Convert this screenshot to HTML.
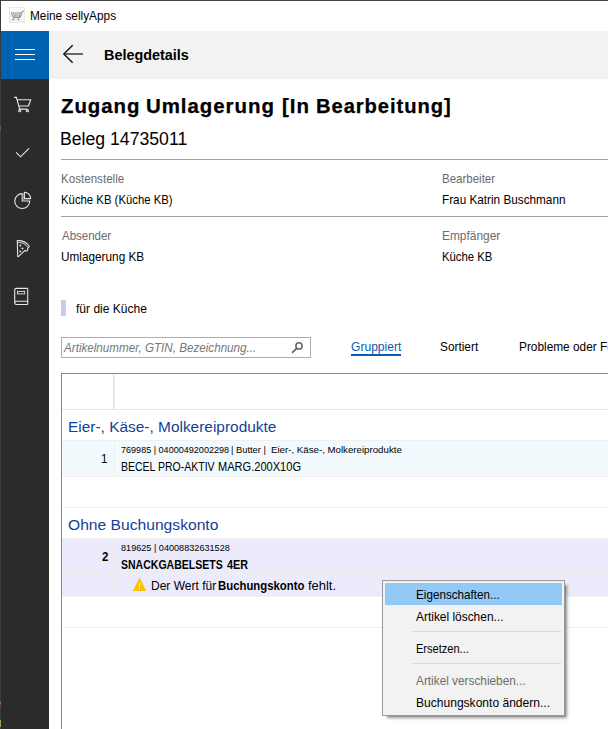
<!DOCTYPE html>
<html lang="de"><head><meta charset="utf-8">
<title>Meine sellyApps</title>
<style>
*{box-sizing:border-box;margin:0;padding:0}
html,body{width:608px;height:729px;overflow:hidden;background:#fff}
body{position:relative;font-family:"Liberation Sans",sans-serif;font-size:12px;color:#000}
.abs{position:absolute}
.t{position:absolute;white-space:nowrap;line-height:1;transform-origin:0 0}
.hr{height:1px;background:#a0a0a0;left:61px;width:547px}
.msep{left:413px;width:148px;height:1px;background:#d7d7d7}
svg{position:absolute;overflow:visible}
</style></head><body>
<div class="abs" style="left:0;top:0;width:608px;height:1px;background:#444"></div>
<div class="abs" style="left:1px;top:31px;width:48px;height:698px;background:#2b2b2b"></div>
<div class="abs" style="left:1px;top:31px;width:48px;height:48px;background:#0063b1"></div>
<div class="abs" style="left:0;top:0;width:1px;height:729px;background:#3a3a3a"></div>
<div class="abs" style="left:0;top:702px;width:1px;height:6px;background:linear-gradient(#8494aa 0,#8494aa 20%,#6c3d28 30%,#6c3d28 100%)"></div>
<div class="abs" style="left:0;top:720px;width:1px;height:7px;background:#9c9b6c"></div>
<div class="abs" style="left:0;top:126px;width:1px;height:5px;background:#4a5a78"></div>
<div class="abs" style="left:49px;top:31px;width:559px;height:48px;background:#f2f2f2"></div>

<!-- app icon -->
<div class="abs" style="left:9px;top:7px;width:16px;height:16px;background:linear-gradient(#fcfcfc,#f1f1f1);border:1px solid #e9e9e9"></div>
<svg style="left:9px;top:7px" width="16" height="16" viewBox="0 0 16 16"><path d="M15 4.3 H13.3 L11.2 10.4 H3.9" fill="none" stroke="#8a8a8a" stroke-width="1"/><path d="M2.2 5.3 L3.9 10 M4.6 5.3 L5.4 9.8 M6.9 5.3 V9.8 M9.2 5.3 L8.6 9.8 M11.3 5.3 L10.4 9.8" stroke="#8c8c8c" stroke-width="1" fill="none"/><path d="M2 5.7 H11.6" stroke="#bdbdbd" stroke-width="1"/><path d="M3.3 12.4 H5.5 M4.4 11.4 V13.3 M8.3 12.4 H10.5 M9.4 11.4 V13.3" stroke="#8f8f8f" stroke-width="0.9"/></svg>

<!-- hamburger -->
<div class="abs" style="left:15px;top:49px;width:20px;height:1px;background:#fff"></div>
<div class="abs" style="left:15px;top:54px;width:20px;height:1px;background:#fff"></div>
<div class="abs" style="left:15px;top:59px;width:20px;height:1px;background:#fff"></div>

<!-- sidebar icons -->
<svg style="left:0;top:0" width="49" height="320" viewBox="0 0 49 320" fill="none" stroke="#e6e6e6" stroke-width="1.1">
 <!-- cart -->
 <path d="M14 97.4 H16.4 L19.7 109.1 H27.4 M17.3 99.7 H30.7 L28.5 106 H19.1"/>
 <circle cx="19.7" cy="110.7" r="1.05"/><circle cx="27.4" cy="110.7" r="1.05"/>
 <!-- check -->
 <path d="M16.1 152.4 L20.5 156.8 L29 148.3"/>
 <!-- pie -->
 <path d="M22.2 193.6 A7.45 7.45 0 1 0 29.65 201.05 H22.2 Z"/>
 <path d="M24.4 192.3 A6.2 6.2 0 0 1 30.6 198.5 H24.4 Z"/>
 <path d="M23.4 193.2 V199.8 H30.2" stroke="#8a8a8a" stroke-width="1"/>
 <!-- pizza -->
 <path d="M17.3 241 Q17.2 240.3 18 240.4 Q25 240.6 29 246 Q29.4 246.7 28.9 247.2 L27.6 248.4 Q28.1 250.9 26.3 251 Q24.9 251 25.3 250.2 L18.4 256.6 Q17.7 256.9 17.7 256 Z"/>
 <path d="M17.6 242.4 Q24.4 242.3 28 247.6" stroke-width="0.9"/>
 <g fill="#e6e6e6" stroke="none"><circle cx="20.3" cy="245.5" r="1"/><circle cx="22.5" cy="248.6" r="1"/><circle cx="20.3" cy="251.5" r="1"/></g>
 <!-- book -->
 <path d="M27.7 288.4 H16.3 Q14.7 288.4 14.7 290 V302.8 Q14.7 304.5 16.3 304.5 H27.7 M27.7 288.4 V304.5 M27.7 301.3 H16.3 Q14.7 301.3 14.7 302.8"/>
 <rect x="17.5" y="291.4" width="7.2" height="2.5" stroke-width="0.9"/>
</svg>

<!-- back arrow -->
<svg style="left:49px;top:31px" width="48" height="48" viewBox="49 31 48 48" fill="none"><path d="M64 54 H83" stroke="#444" stroke-width="1.6"/><path d="M72.7 45.2 L63.8 54 L72.7 62.7" stroke="#111" stroke-width="1.4"/></svg>

<div class="abs hr" style="top:159px"></div>
<div class="abs hr" style="top:216px"></div>

<div class="abs" style="left:61px;top:300px;width:5px;height:16px;background:#c9c9f4"></div>

<div class="abs" style="left:61px;top:337px;width:250px;height:21px;border:1px solid #abadb3;background:#fff"></div>
<svg style="left:290px;top:341px" width="14" height="14" viewBox="0 0 14 14"><circle cx="9" cy="4.9" r="3.1" fill="none" stroke="#666" stroke-width="1.6"/><path d="M6.6 7.4 L2.1 11.9" stroke="#666" stroke-width="1.7" fill="none"/></svg>
<div class="abs" style="left:351px;top:354px;width:50px;height:2px;background:#0a5ab2"></div>

<!-- table -->
<div class="abs" style="left:61px;top:373px;width:560px;height:370px;border:1px solid #828790;background:#fff"></div>
<div class="abs" style="left:62px;top:409px;width:546px;height:1px;background:#e8e8e8"></div>
<div class="abs" style="left:113px;top:374px;width:1px;height:35px;background:#e4e4e4"></div>
<div class="abs" style="left:114px;top:374px;width:1px;height:35px;background:#f0f0f0"></div>
<div class="abs" style="left:62px;top:440px;width:546px;height:37px;background:#f3fafd;border-top:1px solid #efefef;border-bottom:1px solid #efefef"></div>
<div class="abs" style="left:114px;top:441px;width:1px;height:35px;background:#f0f0f0"></div>
<div class="abs" style="left:62px;top:507px;width:546px;height:1px;background:#efefef"></div>
<div class="abs" style="left:62px;top:538px;width:546px;height:59px;background:#ebebfc;border-top:1px solid #efefef;border-bottom:1px solid #efefef"></div>
<div class="abs" style="left:62px;top:574px;width:546px;height:1px;background:#eeeeee"></div>
<div class="abs" style="left:114px;top:539px;width:1px;height:57px;background:#eeeeee"></div>
<div class="abs" style="left:62px;top:627px;width:546px;height:1px;background:#efefef"></div>
<svg style="left:0;top:0" width="160" height="600" viewBox="0 0 160 600"><path d="M139.55 577.6 L146.3 591.1 H132.8 Z" fill="#fdc10c"/><rect x="139" y="583" width="1.1" height="4.1" fill="#ffefb5"/><rect x="139" y="587.9" width="1.1" height="1.3" fill="#ffefb5"/></svg>

<!-- context menu -->
<div class="abs" style="left:388px;top:586px;width:178px;height:131px;background:rgba(0,0,0,.42);box-shadow:0 0 3px 1px rgba(0,0,0,.42)"></div>
<div class="abs" style="left:382px;top:580px;width:183px;height:136px;border:1px solid #999;background:#f2f2f2"></div>
<div class="abs" style="left:385px;top:583px;width:177px;height:22px;background:#91c9f7"></div>
<div class="abs msep" style="top:631px"></div>
<div class="abs msep" style="top:663px"></div>

<div class="t" id="wtitle" style="left:30.20px;top:10px;font-size:12px;transform:scaleX(0.9847);">Meine sellyApps</div>
<div class="t" id="bd" style="left:104.42px;top:47px;font-size:15px;font-weight:bold;transform:scaleX(0.9605);">Belegdetails</div>
<div class="t" id="h1a" style="left:60.97px;top:97px;font-size:19.3px;font-weight:bold;letter-spacing:0.9px;-webkit-text-stroke:0.25px #000;transform:scaleX(1.0575);">Zugang</div>
<div class="t" id="h1b" style="left:146.02px;top:97px;font-size:19.3px;font-weight:bold;letter-spacing:0.9px;-webkit-text-stroke:0.25px #000;transform:scaleX(1.0607);">Umlagerung</div>
<div class="t" id="h1c" style="left:282.32px;top:97px;font-size:19.3px;font-weight:bold;letter-spacing:0.9px;-webkit-text-stroke:0.25px #000;transform:scaleX(1.0602);">[In</div>
<div class="t" id="h1d" style="left:315.60px;top:97px;font-size:19.3px;font-weight:bold;letter-spacing:0.9px;-webkit-text-stroke:0.25px #000;transform:scaleX(1.0454);">Bearbeitung]</div>
<div class="t" id="h2" style="left:60.22px;top:131px;font-size:17.6px;transform:scaleX(1.0031);">Beleg 14735011</div>
<div class="t" id="l1" style="left:60.91px;top:173px;font-size:12.2px;color:#6b6b6b;transform:scaleX(0.9520);">Kostenstelle</div>
<div class="t" id="v1" style="left:60.93px;top:194px;font-size:12.2px;transform:scaleX(0.9309);">Küche KB (Küche KB)</div>
<div class="t" id="l2" style="left:441.74px;top:173px;font-size:12.2px;color:#6b6b6b;transform:scaleX(0.9434);">Bearbeiter</div>
<div class="t" id="v2" style="left:441.71px;top:194px;font-size:12.2px;transform:scaleX(0.9643);">Frau Katrin Buschmann</div>
<div class="t" id="l3" style="left:61.69px;top:230px;font-size:12.2px;color:#6b6b6b;transform:scaleX(0.9420);">Absender</div>
<div class="t" id="v3" style="left:60.85px;top:251px;font-size:12.2px;transform:scaleX(0.9667);">Umlagerung KB</div>
<div class="t" id="l4" style="left:441.70px;top:230px;font-size:12.2px;color:#6b6b6b;transform:scaleX(0.9774);">Empfänger</div>
<div class="t" id="v4" style="left:441.73px;top:251px;font-size:12.2px;transform:scaleX(0.9302);">Küche KB</div>
<div class="t" id="note" style="left:75.60px;top:303px;font-size:12.2px;transform:scaleX(0.9871);">für die Küche</div>
<div class="t" id="ph" style="left:64.30px;top:342px;font-size:12.2px;font-style:italic;color:#777;transform:scaleX(0.9557);">Artikelnummer, GTIN, Bezeichnung...</div>
<div class="t" id="t1" style="left:350.55px;top:341px;font-size:12.2px;color:#1259b3;transform:scaleX(0.9910);">Gruppiert</div>
<div class="t" id="t2" style="left:440.07px;top:341px;font-size:12.2px;transform:scaleX(0.9723);">Sortiert</div>
<div class="t" id="t3" style="left:518.71px;top:341px;font-size:12.2px;transform:scaleX(0.9722);">Probleme oder Fehler</div>
<div class="t" id="g1" style="left:67.67px;top:419px;font-size:15.1px;color:#123f97;transform:scaleX(1.0222);">Eier-, Käse-, Molkereiprodukte</div>
<div class="t" id="n1" style="left:100.79px;top:453px;font-size:12.2px;transform:scaleX(0.9500);">1</div>
<div class="t" id="s1a" style="left:120.87px;top:446px;font-size:9.1px;transform:scaleX(0.9953);">769985 | 04000492002298</div>
<div class="t" id="s1b" style="left:230.80px;top:446px;font-size:9.1px;transform:scaleX(1.0250);">| Butter |</div>
<div class="t" id="s1c" style="left:270.50px;top:446px;font-size:9.1px;transform:scaleX(1.0651);">Eier-, Käse-, Molkereiprodukte</div>
<div class="t" id="a1a" style="left:120.73px;top:461px;font-size:12.2px;transform:scaleX(0.8621);">BECEL PRO-AKTIV</div>
<div class="t" id="a1b" style="left:218.23px;top:461px;font-size:12.2px;transform:scaleX(0.9077);">MARG.200X10G</div>
<div class="t" id="g2" style="left:68.22px;top:517px;font-size:15.1px;color:#123f97;transform:scaleX(1.0359);">Ohne Buchungskonto</div>
<div class="t" id="n2" style="left:101.73px;top:551px;font-size:12.2px;font-weight:bold;transform:scaleX(0.9500);">2</div>
<div class="t" id="s2" style="left:120.92px;top:544px;font-size:9.1px;transform:scaleX(1.0022);">819625 | 04008832631528</div>
<div class="t" id="a2a" style="left:121.07px;top:559px;font-size:12.2px;font-weight:bold;transform:scaleX(0.8636);">SNACKGABELSETS</div>
<div class="t" id="a2b" style="left:226.76px;top:559px;font-size:12.2px;font-weight:bold;transform:scaleX(0.8868);">4ER</div>
<div class="t" id="w2a" style="left:150.59px;top:580px;font-size:12.2px;transform:scaleX(0.9862);">Der Wert für</div>
<div class="t" id="w2b" style="left:218.27px;top:580px;font-size:12.2px;font-weight:bold;transform:scaleX(0.9313);">Buchungskonto</div>
<div class="t" id="w2c" style="left:307.57px;top:580px;font-size:12.2px;transform:scaleX(1.0618);">fehlt.</div>
<div class="t" id="m1" style="left:415.72px;top:589px;font-size:12.2px;transform:scaleX(0.9585);">Eigenschaften...</div>
<div class="t" id="m2" style="left:415.88px;top:611px;font-size:12.2px;transform:scaleX(0.9780);">Artikel löschen...</div>
<div class="t" id="m3" style="left:415.78px;top:643px;font-size:12.2px;transform:scaleX(0.9069);">Ersetzen...</div>
<div class="t" id="m4" style="left:415.88px;top:675px;font-size:12.2px;color:#6d6d6d;transform:scaleX(0.9697);">Artikel verschieben...</div>
<div class="t" id="m5" style="left:415.69px;top:697px;font-size:12.2px;transform:scaleX(0.9891);">Buchungskonto ändern...</div>
</body></html>
